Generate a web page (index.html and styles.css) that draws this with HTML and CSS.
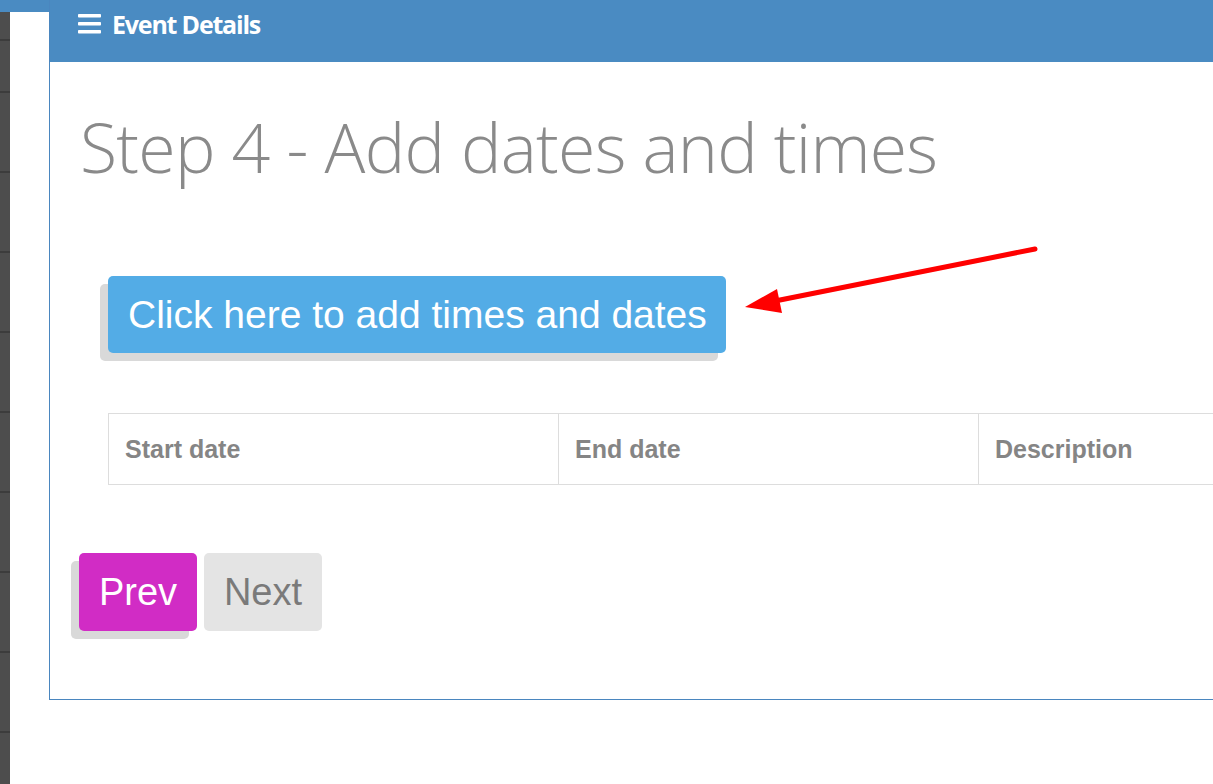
FILE: index.html
```html
<!DOCTYPE html>
<html>
<head>
<meta charset="utf-8">
<link rel="stylesheet" href="styles.css">
</head>
<body>
<div class="main">
  <div class="sidebar"></div>
  <div class="panel">
    <div class="panel-header">
      <svg class="burger" width="24" height="20" viewBox="0 0 24 20">
        <rect x="0" y="0" width="23" height="3.6" rx="0.8" fill="#fff"/>
        <rect x="0" y="8" width="23" height="3.6" rx="0.8" fill="#fff"/>
        <rect x="0" y="16" width="23" height="3.6" rx="0.8" fill="#fff"/>
      </svg>
      <span class="panel-title">Event Details</span>
    </div>
    <div class="panel-body">
      <h1 class="step-title">Step 4 - Add dates and times</h1>
      <div class="add-row">
        <button class="btn btn-blue shadowed">Click here to add times and dates</button>
      </div>
      <table class="dates">
        <thead>
          <tr>
            <th class="c1">Start date</th>
            <th class="c2">End date</th>
            <th class="c3">Description</th>
          </tr>
        </thead>
      </table>
      <div class="nav-row">
        <button class="btn btn-prev shadowed">Prev</button>
        <button class="btn btn-next">Next</button>
      </div>
    </div>
  </div>
</div>
<svg class="arrow" width="1213" height="784" viewBox="0 0 1213 784">
  <line x1="1035" y1="249" x2="775" y2="301" stroke="#f00" stroke-width="5" stroke-linecap="round"/>
  <polygon points="745,307 777,289 782,313" fill="#f00"/>
</svg>
</body>
</html>
```
FILE: styles.css
```css
html, body {
  margin: 0;
  padding: 0;
  background: #fff;
  overflow: hidden;
}
body {
  width: 1213px;
  height: 784px;
  position: relative;
  font-family: "Liberation Sans", Arial, sans-serif;
}
.main {
  display: flex;
  align-items: flex-start;
  height: 784px;
  background: linear-gradient(to bottom, #4a8bc2 0 12px, #fff 12px);
}
.sidebar {
  width: 10px;
  height: 772px;
  margin-top: 12px;
  flex: none;
  background-color: #4d4d4d;
  background-image: repeating-linear-gradient(to bottom, #3c3c3c 0 2px, #4d4d4d 2px 80px);
  background-position: 0 79px;
}
.panel {
  margin-left: 39px;
  flex: 1;
  min-width: 0;
  height: 699px;
  border-left: 1px solid #4a86bf;
  border-bottom: 1px solid #4a86bf;
  display: flex;
  flex-direction: column;
  overflow: hidden;
}
.panel-header {
  height: 62px;
  flex: none;
  background: #4a8bc2;
  display: flex;
  align-items: flex-start;
  padding-left: 29px;
  gap: 10px;
  margin-left: -1px;
}
.burger {
  margin-top: 14px;
}
.panel-title {
  color: #fff;
  font-family: "Open Sans", sans-serif;
  font-weight: 700;
  font-size: 25px;
  line-height: 34px;
  letter-spacing: -1.2px;
  margin-top: 7px;
}
.panel-body {
  padding-left: 30px;
}
.step-title {
  margin: 40px 0 0 0;
  font-family: "Open Sans", sans-serif;
  font-weight: 300;
  font-size: 68px;
  color: #8a8a8a;
  line-height: 90px;
  letter-spacing: -0.75px;
  white-space: nowrap;
}
.add-row {
  margin-top: 84px;
  padding-left: 28px;
}
.btn {
  border: none;
  border-radius: 5px;
  font-family: "Liberation Sans", Arial, sans-serif;
  font-size: 38px;
  height: 78px;
  padding: 0 20px;
  cursor: pointer;
}
.shadowed {
  box-shadow: -8px 8px 0 #d9d9d9;
}
.btn-blue {
  background: #53ace6;
  color: #fff;
  height: 77px;
  padding: 0 19px 0 20px;
  font-size: 39px;
}
.dates {
  margin: 60px 0 0 28px;
  border-collapse: collapse;
  width: 1200px;
}
.dates th {
  height: 70px;
  border: 1px solid #dddddd;
  text-align: left;
  padding: 0 0 0 16px;
  font-size: 25px;
  font-weight: bold;
  color: #858585;
}
.dates .c1 { width: 433px; }
.dates .c2 { width: 403px; }
.nav-row {
  margin-top: 68px;
  margin-left: -1px;
  display: flex;
  gap: 7px;
}
.btn-prev {
  background: #d12cc5;
  color: #fff;
  width: 118px;
  padding: 0;
}
.btn-next {
  background: #e4e4e4;
  color: #7a7a7a;
  width: 118px;
  padding: 0;
}
.arrow {
  position: absolute;
  left: 0;
  top: 0;
  pointer-events: none;
}
```
